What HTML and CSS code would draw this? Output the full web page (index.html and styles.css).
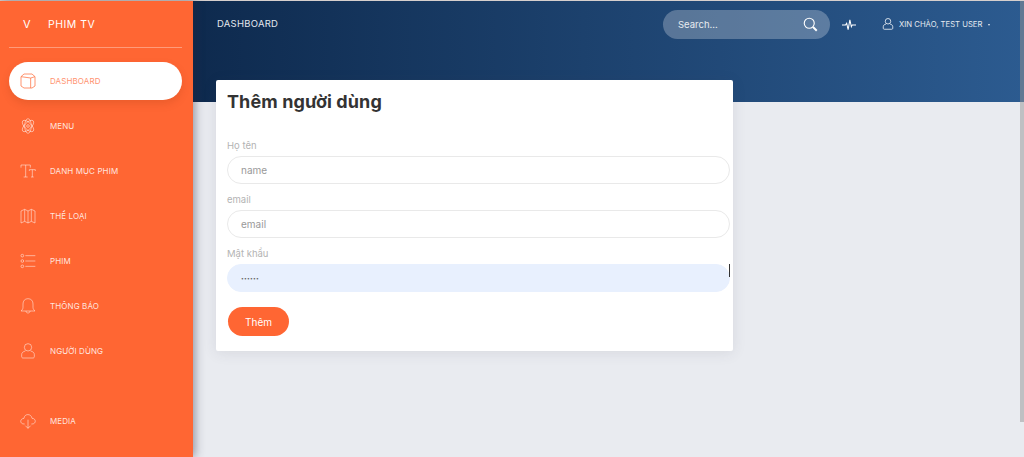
FILE: index.html
```html
<!DOCTYPE html>
<html lang="vi">
<head>
<meta charset="utf-8">
<title>Dashboard</title>
<link rel="stylesheet" href="styles.css">
</head>
<body>
<div class="app">
  <aside class="sidebar">
    <div class="brand"><span class="brand-mini">V</span><span class="brand-name">PHIM TV</span></div>
    <ul class="nav">
      <li class="nav-item active"><svg class="nav-icon" viewBox="0 0 24 24"><path d="M6 1.500h12l4.500 4v14L18 22.500H6L1.500 19.500v-14zM1.500 5.500 16 7.500l6.500-2M16 7.500v15"/></svg><span>DASHBOARD</span></li>
      <li class="nav-item"><svg class="nav-icon" viewBox="0 0 24 24"><ellipse cx="12" cy="12" rx="11" ry="5" transform="rotate(45 12 12)"/><ellipse cx="12" cy="12" rx="11" ry="5" transform="rotate(-45 12 12)"/><ellipse cx="12" cy="12" rx="11" ry="5" transform="rotate(90 12 12)"/><circle cx="12" cy="12" r="2"/></svg><span>MENU</span></li>
      <li class="nav-item"><svg class="nav-icon" viewBox="0 0 24 24"><path d="M1.500 7V3h14v4M8.500 3v18M5.500 21h6M14 12v-2h9v2M18.500 10v11M16.500 21h4"/></svg><span>DANH MỤC PHIM</span></li>
      <li class="nav-item"><svg class="nav-icon" viewBox="0 0 24 24"><path d="M1.500 4.500 7 2l5 2.500L17 2l5.500 2.500v18L17 20l-5 2.500L7 20l-5.500 2.500zM7 2v18M12 4.500v18M17 2v18"/></svg><span>THỂ LOẠI</span></li>
      <li class="nav-item"><svg class="nav-icon" viewBox="0 0 24 24"><circle cx="3.500" cy="4" r="2"/><circle cx="3.500" cy="12" r="2"/><circle cx="3.500" cy="20" r="2"/><path d="M8 4h15M8 12h15M8 20h15"/></svg><span>PHIM</span></li>
      <li class="nav-item"><svg class="nav-icon" viewBox="0 0 24 24"><path d="M12 1c-5 0-7.500 3.500-7.500 8v5c0 2.500-1.500 4-3 5.500h21c-1.500-1.500-3-3-3-5.500V9c0-4.500-2.500-8-7.500-8zM9 19.500c0 4 6 4 6 0"/></svg><span>THÔNG BÁO</span></li>
      <li class="nav-item"><svg class="nav-icon" viewBox="0 0 24 24"><circle cx="12" cy="6.500" r="5.500"/><path d="M8 12c-3.500 1-5.500 2.500-5.500 5.500v3c0 1 .5 2 2 2h15c1.500 0 2-1 2-2v-3c0-3-2-4.500-5.500-5.500"/></svg><span>NGƯỜI DÙNG</span></li>
      <li class="nav-item media"><svg class="nav-icon" viewBox="0 0 24 24"><path d="M7 16.500H6c-6.500 0-6.500-8 0-8.500C6.500 .5 17 .5 18 8c6.500 0 6.500 8.500 0 8.500h-1M12 10v13M8 19l4 4 4-4"/></svg><span>MEDIA</span></li>
    </ul>
  </aside>
  <main class="main">
    <div class="hero">
      <header class="topbar">
        <div class="page-title">DASHBOARD</div>
        <div class="top-right">
          <div class="search"><span class="search-text">Search...</span><svg class="search-icon" viewBox="0 0 24 24"><circle cx="10" cy="10" r="8"/><path d="M16 16l6 6" class="thick"/></svg></div>
          <svg class="pulse" viewBox="0 0 24 24"><path d="M0 12h6l2-3 2.500 11 3-17 2.500 12 1.500-3h6.500"/></svg>
          <div class="user"><svg class="user-icon" viewBox="0 0 24 24"><circle cx="12" cy="6.500" r="5.500"/><path d="M8 12c-3.500 1-5.500 2.500-5.500 5.500v3c0 1 .5 2 2 2h15c1.500 0 2-1 2-2v-3c0-3-2-4.500-5.500-5.500"/></svg><span>XIN CHÀO, TEST USER</span><i class="caret"></i></div>
        </div>
      </header>
    </div>
    <section class="content">
      <form class="card">
        <h1 class="card-title">Thêm người dùng</h1>
        <label class="field"><span class="field-label">Họ tên</span><input class="input" type="text" placeholder="name"></label>
        <label class="field"><span class="field-label">email</span><input class="input" type="text" placeholder="email"></label>
        <label class="field"><span class="field-label">Mật khẩu</span><span class="input-wrap"><input class="input filled" type="password" value="123456"><i class="cursor"></i></span></label>
        <button class="btn" type="button">Thêm</button>
      </form>
    </section>
  </main>
  <div class="scrollbar"></div>
</div>
</body>
</html>
```
FILE: styles.css
```css
* { box-sizing: border-box; }
html, body { margin: 0; height: 100%; overflow: hidden; }
body { font-family: "Inter", "Noto Sans", "Liberation Sans", sans-serif; background: #e9ebf0; color: #333; }
.app { position: relative; display: flex; height: 457px; border-top: 1px solid #d6cfcd; }
.sidebar { width: 193px; flex: none; background: #ff6633; box-shadow: 2px 0 9px rgba(40,40,60,.45); padding: 0 11px 0 9px; position: relative; z-index: 2; color: #fff; }
.brand { height: 47px; margin-bottom: 14px; border-bottom: 1px solid rgba(255,255,255,.35); display: flex; align-items: center; color: #fff; font-size: 11px; font-weight: 400; letter-spacing: .2px; }
.brand-mini { width: 39px; padding-left: 14px; }
.brand-name { font-size: 10.500px; letter-spacing: .5px; }
.nav { list-style: none; margin: 0; padding: 0; display: flex; flex-direction: column; gap: 7px; }
.nav-item { height: 38px; border-radius: 19px; display: flex; align-items: center; padding-left: 11px; font-size: 8px; font-weight: 400; letter-spacing: .1px; color: rgba(255,255,255,.85); }
.nav-icon { width: 16px; height: 16px; flex: none; fill: none; stroke: rgba(255,255,255,.62); stroke-width: 1.200; margin-right: 14px; }
.nav-item.active { background: #fff; color: #ff9270; box-shadow: 0 4px 8px rgba(120,40,10,.15); }
.nav-item.active .nav-icon { stroke: #ff7a4d; }
.nav-item.media { margin-top: 25px; }
.main { flex: 1; min-width: 0; }
.hero { height: 101px; background: linear-gradient(90deg, #0e2a4e 0%, #2c5b90 100%); }
.topbar { display: flex; justify-content: space-between; align-items: flex-start; padding: 9px 26px 0 24px; color: #fff; }
.page-title { font-size: 9.500px; font-weight: 400; color: #e3e8ee; margin-top: 8px; letter-spacing: .25px; }
.top-right { display: flex; align-items: center; }
.search { width: 167px; height: 29px; border-radius: 15px; background: rgba(255,255,255,.26); display: flex; align-items: center; justify-content: space-between; padding: 0 12px 0 15px; margin-right: 12px; }
.search-text { font-size: 9.500px; color: #e8ecf0; }
.search-icon { width: 15px; height: 15px; fill: none; stroke: #fff; stroke-width: 1.800; }
.search-icon .thick { stroke-width: 3; }
.pulse { width: 14px; height: 14px; fill: none; stroke: #fff; stroke-width: 1.800; margin-right: 26px; }
.user { display: flex; align-items: center; font-size: 7.700px; font-weight: 400; color: #e6ebf1; width: 116px; }
.user-icon { width: 12px; height: 14px; fill: none; stroke: #dfe6ee; stroke-width: 1.800; margin-right: 5px; margin-top: -2px; flex: none; }
.caret { width: 0; height: 0; margin-left: 6px; border: 1.500px solid transparent; border-top: 2px solid #e6ebf1; margin-top: 2px; }
.content { padding: 0 0 0 23px; }
.card { width: 517px; height: 271px; margin-top: -22px; background: #fff; border-radius: 2px; box-shadow: 0 2px 14px rgba(60,60,80,.1); padding: 11px 3px 0 11px; position: relative; }
.card-title { font-size: 18px; font-weight: 700; margin: 0 0 27px; line-height: 22px; color: #333; letter-spacing: .1px; }
.field { display: block; margin-bottom: 10px; }
.field-label { display: block; font-size: 9.500px; color: #b3b3b3; line-height: 12px; margin-bottom: 4px; }
.input-wrap { display: block; position: relative; }
.input { display: block; width: 100%; height: 28px; border: 1px solid #e9e9e9; border-radius: 14px; padding: 0 13px; background: #fff; font: 10px "Inter", "Noto Sans", sans-serif; color: #666; outline: none; }
.input::placeholder { color: #999; opacity: 1; }
.input.filled { background: #e8f0fe; border-color: #e8f0fe; font-size: 5px; letter-spacing: .2px; }
.cursor { position: absolute; right: 0; top: 0; width: 1px; height: 13px; background: #333; }
.btn { display: block; width: 61px; height: 29px; margin: 15px 0 0 1px; border: 0; border-radius: 15px; background: #ff6633; color: #fff; font: 400 10px "Inter", "Noto Sans", sans-serif; }
.scrollbar { position: absolute; right: 0; top: 0; width: 4.500px; height: 421px; background: rgba(150,150,150,.5); z-index: 3; }
```
